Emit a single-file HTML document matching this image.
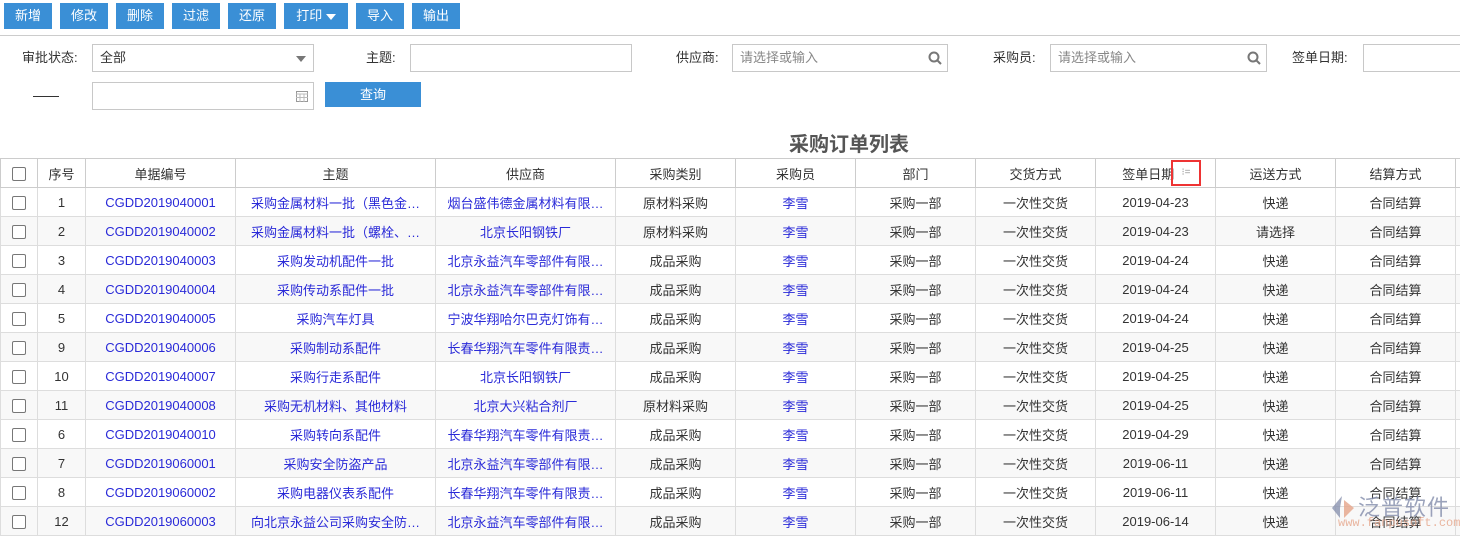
<!DOCTYPE html>
<html><head><meta charset="utf-8"><style>
*{box-sizing:border-box;margin:0;padding:0}
body{width:1460px;height:538px;overflow:hidden;background:#fff;font-family:"Liberation Sans","Noto Sans CJK SC",sans-serif;font-size:13px;color:#333;position:relative}
.b{position:absolute;top:3px;height:26px;background:#3a8fd6;color:#fff;font-size:13px;line-height:26px;text-align:center}
.sep{position:absolute;left:0;top:35px;width:1460px;height:1px;background:#ccc}
.lbl{position:absolute;font-size:13px;color:#333;line-height:28px}
.in{position:absolute;height:28px;border:1px solid #c8c8c8;background:#fff;font-size:13px;line-height:26px;padding-left:7px}
.ph{color:#888}
.title{position:absolute;left:0;width:1698px;top:128px;text-align:center;font-size:20px;font-weight:bold;color:#555}
table{position:absolute;left:0;top:158px;border-collapse:collapse;table-layout:fixed;width:1470px;border-top:1px solid #3a8fd6}
td,th{height:29px;border:1px solid #ddd;text-align:center;font-weight:normal;white-space:nowrap;overflow:hidden;font-size:13px;padding:0 4px}
th{border-color:#ccc;height:29px}
tr:nth-child(odd) td{background:#f8f8f8}
.l{color:#2a2ad8}
.cb{display:inline-block;width:14px;height:14px;border:1px solid #777;border-radius:2px;vertical-align:middle;background:#fff}
</style></head><body>
<div class="b" style="left:4px;width:48px">新增</div>
<div class="b" style="left:60px;width:48px">修改</div>
<div class="b" style="left:116px;width:48px">删除</div>
<div class="b" style="left:172px;width:48px">过滤</div>
<div class="b" style="left:228px;width:48px">还原</div>
<div class="b" style="left:284px;width:64px">打印 <span style="display:inline-block;border-left:5px solid transparent;border-right:5px solid transparent;border-top:6px solid #fff;vertical-align:middle"></span></div>
<div class="b" style="left:356px;width:48px">导入</div>
<div class="b" style="left:412px;width:48px">输出</div>
<div class="sep"></div>

<div class="lbl" style="left:22px;top:44px">审批状态:</div>
<div class="in" style="left:92px;top:44px;width:222px">全部<span style="position:absolute;right:7px;top:11px;border-left:5px solid transparent;border-right:5px solid transparent;border-top:6px solid #777"></span></div>
<div class="lbl" style="left:366px;top:44px">主题:</div>
<div class="in" style="left:410px;top:44px;width:222px"></div>
<div class="lbl" style="left:676px;top:44px">供应商:</div>
<div class="in ph" style="left:732px;top:44px;width:216px">请选择或输入<svg style="position:absolute;right:5px;top:6px" width="14" height="14" viewBox="0 0 14 14"><circle cx="6" cy="6" r="4.5" fill="none" stroke="#777" stroke-width="2"/><path d="M9 9l4 4" stroke="#777" stroke-width="2"/></svg></div>
<div class="lbl" style="left:993px;top:44px">采购员:</div>
<div class="in ph" style="left:1050px;top:44px;width:217px">请选择或输入<svg style="position:absolute;right:5px;top:6px" width="14" height="14" viewBox="0 0 14 14"><circle cx="6" cy="6" r="4.5" fill="none" stroke="#777" stroke-width="2"/><path d="M9 9l4 4" stroke="#777" stroke-width="2"/></svg></div>
<div class="lbl" style="left:1292px;top:44px">签单日期:</div>
<div class="in" style="left:1363px;top:44px;width:110px"></div>

<div style="position:absolute;left:33px;top:96px;width:26px;height:1px;background:#333"></div>
<div class="in" style="left:92px;top:82px;width:222px"><svg style="position:absolute;right:5px;top:7px" width="12" height="12" viewBox="0 0 12 12"><rect x="0.5" y="1.5" width="11" height="10" fill="none" stroke="#999"/><path d="M0 4h12M4 4v8M8 4v8M0 7.5h12" stroke="#bbb"/></svg></div>
<div class="b" style="left:325px;top:82px;width:96px;height:25px;line-height:25px">查询</div>

<div class="title">采购订单列表</div>

<table>
<colgroup><col style="width:37px"><col style="width:48px"><col style="width:150px"><col style="width:200px"><col style="width:180px"><col style="width:120px"><col style="width:120px"><col style="width:120px"><col style="width:120px"><col style="width:120px"><col style="width:120px"><col style="width:120px"><col style="width:15px"></colgroup>
<tr><th><span class="cb"></span></th><th>序号</th><th>单据编号</th><th>主题</th><th>供应商</th><th>采购类别</th><th>采购员</th><th>部门</th><th>交货方式</th><th style="position:relative">签单日期<span style="position:absolute;left:75px;top:1px;width:30px;height:26px;border:2px solid #e33;font-size:10px;color:#999;line-height:22px">⁝=</span>&nbsp;&nbsp;&nbsp;&nbsp;</th><th>运送方式</th><th>结算方式</th><th></th></tr>
<tr><td><span class="cb"></span></td><td>1</td><td class="l">CGDD2019040001</td><td class="l">采购金属材料一批（黑色金…</td><td class="l">烟台盛伟德金属材料有限…</td><td>原材料采购</td><td class="l">李雪</td><td>采购一部</td><td>一次性交货</td><td>2019-04-23</td><td>快递</td><td>合同结算</td><td></td></tr>
<tr><td><span class="cb"></span></td><td>2</td><td class="l">CGDD2019040002</td><td class="l">采购金属材料一批（螺栓、…</td><td class="l">北京长阳钢铁厂</td><td>原材料采购</td><td class="l">李雪</td><td>采购一部</td><td>一次性交货</td><td>2019-04-23</td><td>请选择</td><td>合同结算</td><td></td></tr>
<tr><td><span class="cb"></span></td><td>3</td><td class="l">CGDD2019040003</td><td class="l">采购发动机配件一批</td><td class="l">北京永益汽车零部件有限…</td><td>成品采购</td><td class="l">李雪</td><td>采购一部</td><td>一次性交货</td><td>2019-04-24</td><td>快递</td><td>合同结算</td><td></td></tr>
<tr><td><span class="cb"></span></td><td>4</td><td class="l">CGDD2019040004</td><td class="l">采购传动系配件一批</td><td class="l">北京永益汽车零部件有限…</td><td>成品采购</td><td class="l">李雪</td><td>采购一部</td><td>一次性交货</td><td>2019-04-24</td><td>快递</td><td>合同结算</td><td></td></tr>
<tr><td><span class="cb"></span></td><td>5</td><td class="l">CGDD2019040005</td><td class="l">采购汽车灯具</td><td class="l">宁波华翔哈尔巴克灯饰有…</td><td>成品采购</td><td class="l">李雪</td><td>采购一部</td><td>一次性交货</td><td>2019-04-24</td><td>快递</td><td>合同结算</td><td></td></tr>
<tr><td><span class="cb"></span></td><td>9</td><td class="l">CGDD2019040006</td><td class="l">采购制动系配件</td><td class="l">长春华翔汽车零件有限责…</td><td>成品采购</td><td class="l">李雪</td><td>采购一部</td><td>一次性交货</td><td>2019-04-25</td><td>快递</td><td>合同结算</td><td></td></tr>
<tr><td><span class="cb"></span></td><td>10</td><td class="l">CGDD2019040007</td><td class="l">采购行走系配件</td><td class="l">北京长阳钢铁厂</td><td>成品采购</td><td class="l">李雪</td><td>采购一部</td><td>一次性交货</td><td>2019-04-25</td><td>快递</td><td>合同结算</td><td></td></tr>
<tr><td><span class="cb"></span></td><td>11</td><td class="l">CGDD2019040008</td><td class="l">采购无机材料、其他材料</td><td class="l">北京大兴粘合剂厂</td><td>原材料采购</td><td class="l">李雪</td><td>采购一部</td><td>一次性交货</td><td>2019-04-25</td><td>快递</td><td>合同结算</td><td></td></tr>
<tr><td><span class="cb"></span></td><td>6</td><td class="l">CGDD2019040010</td><td class="l">采购转向系配件</td><td class="l">长春华翔汽车零件有限责…</td><td>成品采购</td><td class="l">李雪</td><td>采购一部</td><td>一次性交货</td><td>2019-04-29</td><td>快递</td><td>合同结算</td><td></td></tr>
<tr><td><span class="cb"></span></td><td>7</td><td class="l">CGDD2019060001</td><td class="l">采购安全防盗产品</td><td class="l">北京永益汽车零部件有限…</td><td>成品采购</td><td class="l">李雪</td><td>采购一部</td><td>一次性交货</td><td>2019-06-11</td><td>快递</td><td>合同结算</td><td></td></tr>
<tr><td><span class="cb"></span></td><td>8</td><td class="l">CGDD2019060002</td><td class="l">采购电器仪表系配件</td><td class="l">长春华翔汽车零件有限责…</td><td>成品采购</td><td class="l">李雪</td><td>采购一部</td><td>一次性交货</td><td>2019-06-11</td><td>快递</td><td>合同结算</td><td></td></tr>
<tr><td><span class="cb"></span></td><td>12</td><td class="l">CGDD2019060003</td><td class="l">向北京永益公司采购安全防…</td><td class="l">北京永益汽车零部件有限…</td><td>成品采购</td><td class="l">李雪</td><td>采购一部</td><td>一次性交货</td><td>2019-06-14</td><td>快递</td><td>合同结算</td><td></td></tr>
</table>

<svg style="position:absolute;left:1330px;top:494px;opacity:.8" width="26" height="26" viewBox="0 0 26 26"><path d="M12 2L2 14l8 10V14z" fill="#8a93b0"/><path d="M14 6l10 8-10 10z" fill="#e6a58a"/></svg>
<div style="position:absolute;left:1358px;top:490px;font-size:22px;color:#8a93b0;opacity:.85;letter-spacing:1px">泛普软件</div>
<div style="position:absolute;left:1338px;top:516px;font-size:12px;color:#e6a58a;opacity:.8;font-family:'Liberation Mono',monospace">www.fanpusoft.com</div>
</body></html>
